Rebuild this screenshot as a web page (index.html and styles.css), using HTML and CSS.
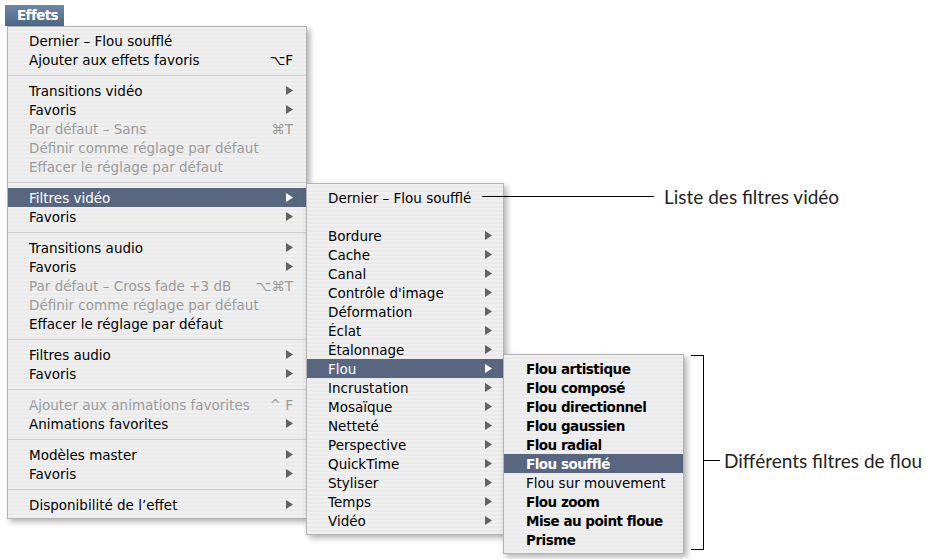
FILE: index.html
```html
<!DOCTYPE html>
<html lang="fr">
<head>
  <meta charset="UTF-8" />
  <title>Effets</title>
  <link rel="stylesheet" href="styles.css">
</head>
<body>

<div class="screen">
  <div class="menubar"><span class="title">Effets</span></div>

  <div class="menu main">
    <div class="item">Dernier – Flou soufflé</div>
    <div class="item">Ajouter aux effets favoris<span class="key">⌥F</span></div>
    <div class="sep"></div>
    <div class="item sub">Transitions vidéo</div>
    <div class="item sub">Favoris</div>
    <div class="item off">Par défaut – Sans<span class="key">⌘T</span></div>
    <div class="item off">Définir comme réglage par défaut</div>
    <div class="item off">Effacer le réglage par défaut</div>
    <div class="sep"></div>
    <div class="item sub on">Filtres vidéo
      <div class="menu cascade filters">
        <div class="item">Dernier – Flou soufflé</div>
        <div class="gap"></div>
        <div class="item sub">Bordure</div>
        <div class="item sub">Cache</div>
        <div class="item sub">Canal</div>
        <div class="item sub">Contrôle d'image</div>
        <div class="item sub">Déformation</div>
        <div class="item sub">Éclat</div>
        <div class="item sub">Étalonnage</div>
        <div class="item sub on">Flou
          <div class="menu cascade blurs">
            <div class="item">Flou artistique</div>
            <div class="item">Flou composé</div>
            <div class="item">Flou directionnel</div>
            <div class="item">Flou gaussien</div>
            <div class="item">Flou radial</div>
            <div class="item on">Flou soufflé</div>
            <div class="item plain">Flou sur mouvement</div>
            <div class="item">Flou zoom</div>
            <div class="item">Mise au point floue</div>
            <div class="item">Prisme</div>
          </div>
        </div>
        <div class="item sub">Incrustation</div>
        <div class="item sub">Mosaïque</div>
        <div class="item sub">Netteté</div>
        <div class="item sub">Perspective</div>
        <div class="item sub">QuickTime</div>
        <div class="item sub">Styliser</div>
        <div class="item sub">Temps</div>
        <div class="item sub">Vidéo</div>
      </div>
    </div>
    <div class="item sub">Favoris</div>
    <div class="sep"></div>
    <div class="item sub">Transitions audio</div>
    <div class="item sub">Favoris</div>
    <div class="item off">Par défaut – Cross fade +3 dB<span class="key">⌥⌘T</span></div>
    <div class="item off">Définir comme réglage par défaut</div>
    <div class="item">Effacer le réglage par défaut</div>
    <div class="sep"></div>
    <div class="item sub">Filtres audio</div>
    <div class="item sub">Favoris</div>
    <div class="sep"></div>
    <div class="item off">Ajouter aux animations favorites<span class="key">^ F</span></div>
    <div class="item sub">Animations favorites</div>
    <div class="sep"></div>
    <div class="item sub">Modèles master</div>
    <div class="item sub">Favoris</div>
    <div class="sep"></div>
    <div class="item sub">Disponibilité de l’effet</div>
  </div>

  <div class="note note-video">
    <span class="note-line"></span>
    <span>Liste des filtres vidéo</span>
  </div>

  <div class="bracket">
    <div class="note note-blur">
      <span class="note-line short"></span>
      <span>Différents filtres de flou</span>
    </div>
  </div>
</div>

</body>
</html>
```

FILE: styles.css
```css
* { box-sizing: border-box; }
body {
  margin: 0;
  background-color: #ffffff;
  color: #000;
  font-family: "DejaVu Sans", sans-serif;
  font-size: 13.5px;
}
.screen {
  position: relative;
  height: 559px;
  padding: 5px 0 0 5px;
}
.menubar {
  display: flex;
}
.title {
  width: 59px;
  height: 21px;
  line-height: 21px;
  padding-left: 12px;
  background: linear-gradient(#6f86a6, #4d6585);
  color: #fff;
  font-weight: bold;
  letter-spacing: -0.6px;
}
.menu {
  border: 1px solid #b3b3b3;
  background: repeating-linear-gradient(#f0f0f0 0, #f0f0f0 2px, #eaeaea 2px, #eaeaea 4px);
  padding: 4px 0;
  box-shadow: 3px 3px 6px rgba(0, 0, 0, 0.3);
}
.main {
  width: 300px;
  margin-left: 2px;
}
.item {
  position: relative;
  display: flex;
  justify-content: space-between;
  align-items: center;
  height: 19px;
  padding: 0 13px 0 21px;
  white-space: nowrap;
}
.item.sub::after {
  content: "";
  width: 7px;
  height: 9px;
  background-color: #636363;
  clip-path: polygon(0 0, 100% 50%, 0 100%);
}
.item.on {
  background-color: #58677f;
  color: #fff;
}
.item.on::after { background-color: #fff; }
.item.off { color: #9b9b9b; }
.sep {
  height: 12px;
  display: flex;
  align-items: center;
}
.sep::before {
  content: "";
  flex: 1;
  height: 1px;
  background-color: #d0d0d0;
}
.gap { height: 19px; }
.cascade {
  position: absolute;
  top: -5px;
  left: 100%;
  color: #000;
}
.filters { width: 198px; }
.filters .item { padding: 0 11px 0 21px; }
.blurs { width: 181px; }
.blurs .item {
  padding-left: 22px;
  font-weight: bold;
  letter-spacing: -0.5px;
}
.blurs .item.plain {
  font-weight: normal;
  letter-spacing: 0;
}
.note {
  position: absolute;
  display: flex;
  align-items: center;
  height: 24px;
  font-family: Lato, sans-serif;
  font-size: 19px;
  color: #231f20;
  white-space: nowrap;
}
.note-video {
  left: 482px;
  top: 184px;
  gap: 10px;
}
.note-line {
  width: 172px;
  height: 1px;
  background-color: #000;
}
.note-line.short { width: 17px; }
.bracket {
  position: absolute;
  left: 691px;
  top: 355px;
  width: 13px;
  height: 195px;
  border: 1px solid #000;
  border-left: none;
}
.note-blur {
  left: 100%;
  top: 92px;
  gap: 4px;
}
```
